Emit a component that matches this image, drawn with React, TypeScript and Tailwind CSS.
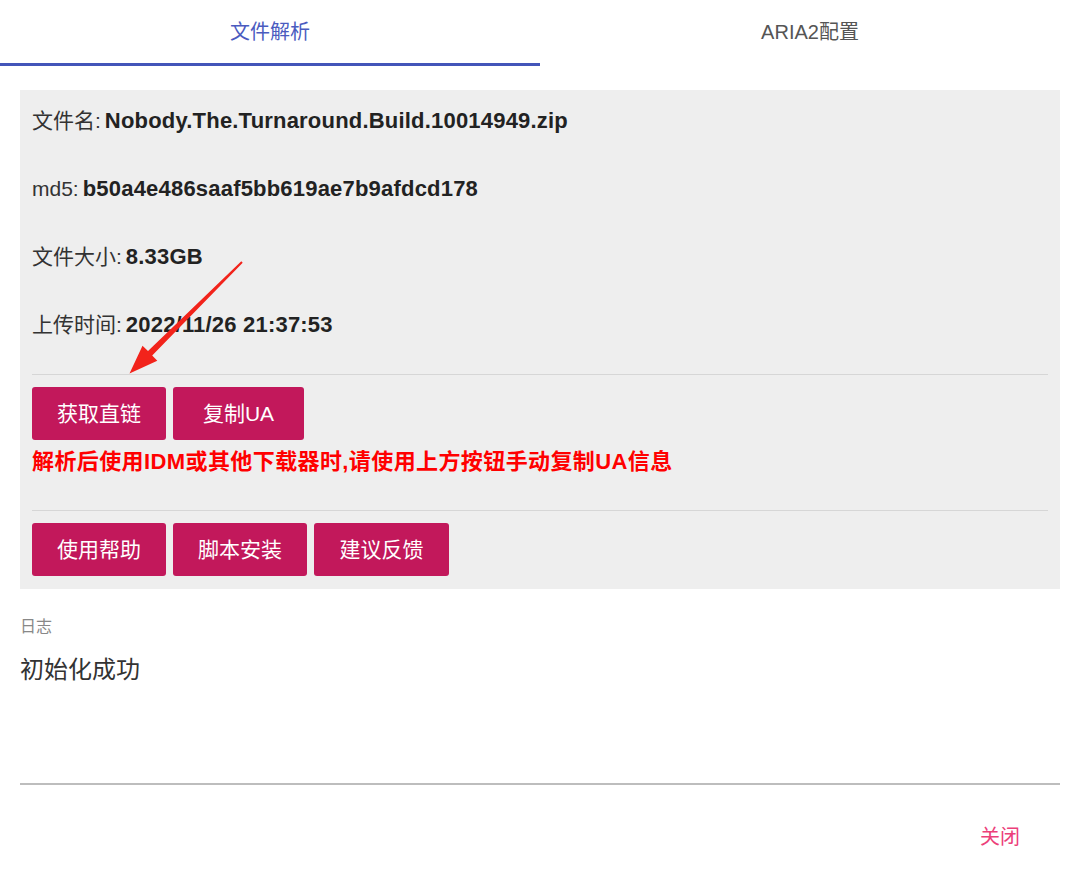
import { useState } from 'react';

const font = { fontFamily: '"Liberation Sans", "Noto Sans CJK SC", sans-serif' };

const infoRows = [
  { label: '文件名', value: 'Nobody.The.Turnaround.Build.10014949.zip' },
  { label: 'md5', value: 'b50a4e486saaf5bb619ae7b9afdcd178' },
  { label: '文件大小', value: '8.33GB' },
  { label: '上传时间', value: '2022/11/26 21:37:53' },
];

function PinkButton({ children, w }: { children: React.ReactNode; w: string }) {
  return (
    <button className={`${w} h-[53px] rounded-[3px] bg-[#c2185b] text-white text-[21px] flex items-center justify-center`}>
      {children}
    </button>
  );
}

export default function App() {
  const [tab, setTab] = useState(0);

  return (
    <div className="relative w-[1080px] h-[892px] bg-white text-[#333]" style={font}>
      {/* tabs */}
      <div className="flex h-[66px]">
        {['文件解析', 'ARIA2配置'].map((t, i) => (
          <button
            key={t}
            onClick={() => setTab(i)}
            className={
              'flex-1 flex items-start justify-center pt-[17px] text-[20px] border-b-[3px] ' +
              (tab === i ? 'text-[#4a5bbf] border-[#4355b9]' : 'text-[#555] border-transparent')
            }
          >
            {t}
          </button>
        ))}
      </div>

      {/* panel */}
      <div className="mx-5 mt-6 bg-[#eeeeee] px-3 pt-[17px] pb-[13px]">
        <div className="flex flex-col gap-10">
          {infoRows.map((r) => (
            <div key={r.label} className="h-7 leading-7 text-[21px] text-[#333] flex items-baseline">
              <span>{r.label}</span>
              <span className="mr-[4px]">:</span>
              <span className="font-bold text-[22px] tracking-[0.2px] text-[#222]">{r.value}</span>
            </div>
          ))}
        </div>

        <div className="mt-[35px] border-t border-[#d6d6d6]" />
        <div className="pt-3 flex gap-[7px]">
          <PinkButton w="w-[134px]">获取直链</PinkButton>
          <PinkButton w="w-[131px]">复制UA</PinkButton>
        </div>
        <div className="mt-2 h-7 leading-7 text-[22px] font-bold tracking-[0.4px] text-[#ff0000]">
          解析后使用IDM或其他下载器时,请使用上方按钮手动复制UA信息
        </div>

        <div className="mt-[34px] border-t border-[#d6d6d6]" />
        <div className="pt-3 flex gap-[7px]">
          <PinkButton w="w-[134px]">使用帮助</PinkButton>
          <PinkButton w="w-[134px]">脚本安装</PinkButton>
          <PinkButton w="w-[135px]">建议反馈</PinkButton>
        </div>
      </div>

      {/* log */}
      <div className="mx-5 mt-[28px]">
        <div className="text-[16px] leading-5 text-[#888]">日志</div>
        <div className="mt-[17px] h-[129px] text-[24px] leading-8 text-[#333]">初始化成功</div>
        <div className="border-t-2 border-[#bdbdbd]" />
      </div>

      <div className="flex justify-end pr-[60px] pt-[37px]">
        <button className="text-[20px] text-[#ec407a]">关闭</button>
      </div>

      {/* annotation arrow */}
      <svg className="absolute left-0 top-0 pointer-events-none" width="1080" height="892">
        <polygon
          points="241.3,261.3 148,351 142.5,345.8 129.5,373.5 157.3,360.8 152.2,355.6 242.7,262.7"
          fill="#f2231b"
        />
      </svg>
    </div>
  );
}
